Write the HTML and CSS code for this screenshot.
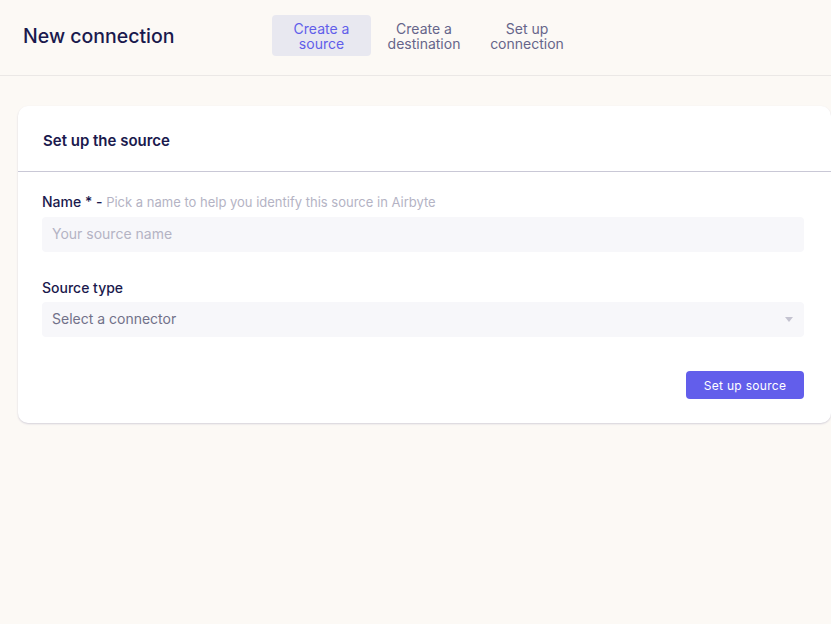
FILE: index.html
```html
<!DOCTYPE html>
<html>
<head>
<meta charset="utf-8">
<link rel="stylesheet" href="styles.css">
</head>
<body>
<header class="header">
  <h1 class="title">New connection</h1>
  <nav class="steps">
    <div class="step active">Create a<br>source</div>
    <div class="step">Create a<br>destination</div>
    <div class="step">Set up<br>connection</div>
  </nav>
</header>
<main class="content">
  <section class="card">
    <div class="card-head">Set up the source</div>
    <div class="card-body">
      <div class="field">
        <div class="label">Name * - <span class="hint">Pick a name to help you identify this source in Airbyte</span></div>
        <div class="input placeholder">Your source name</div>
      </div>
      <div class="field">
        <div class="label">Source type</div>
        <div class="input select">
          <span class="select-text">Select a connector</span>
          <svg class="caret" width="8" height="5" viewBox="0 0 8 5"><path d="M0 0 H8 L4 5 Z" fill="#c4c3d0"/></svg>
        </div>
      </div>
      <div class="actions">
        <button class="btn">Set up source</button>
      </div>
    </div>
  </section>
</main>
</body>
</html>
```
FILE: styles.css
```css
* { box-sizing: border-box; }
html, body { margin: 0; padding: 0; }
body {
  background: #fcf9f5;
  font-family: Inter, "Noto Sans", sans-serif;
  color: #1a194d;
  width: 831px;
  height: 624px;
  overflow: hidden;
}
.header {
  height: 76px;
  border-bottom: 1px solid #ebe8e6;
  display: flex;
  align-items: center;
  padding-left: 23px;
  padding-bottom: 4px;
}
.title {
  margin: 0;
  font-size: 19.5px;
  font-weight: 500;
  width: 249px;
  color: #1a194d;
}
.steps {
  display: flex;
  align-self: flex-start;
  margin-top: 15px;
}
.step {
  font-size: 14px;
  line-height: 15px;
  text-align: center;
  color: #66658a;
  padding: 6px 0;
  height: 41px;
  border-radius: 4px;
  width: 100px;
  margin-right: 3px;
}
.step:nth-child(2) { width: 100px; margin-right: 0; }
.step:nth-child(3) { width: 106px; }
.step.active {
  background: #e8e8f0;
  color: #615eea;
  width: 99px;
}
.content {
  padding: 30px 0 0 18px;
}
.card {
  width: 813px;
  background: #fff;
  border-radius: 10px;
  box-shadow: 0 1px 2px rgba(53, 50, 110, 0.2);
}
.card-head {
  height: 66px;
  padding: 3px 25px 0;
  display: flex;
  align-items: center;
  font-size: 15px;
  font-weight: 600;
  border-bottom: 1px solid #c9c8d6;
  color: #1a194d;
}
.card-body {
  padding: 21px 27px 24px 24px;
}
.field { margin-bottom: 27px; }
.field + .field { margin-bottom: 34px; }
.label {
  font-size: 14px;
  font-weight: 500;
  line-height: 17px;
  margin-bottom: 6px;
  color: #1a194d;
}
.hint {
  font-size: 13px;
  font-weight: 400;
  color: #b4b3c4;
}
.input {
  height: 35px;
  background: #f7f7fa;
  border-radius: 4px;
  padding: 0 10px 2px;
  display: flex;
  align-items: center;
  font-size: 14px;
}
.placeholder { color: #b4b3c4; }
.select {
  justify-content: space-between;
  color: #717189;
  padding-right: 11px;
}
.caret { margin-top: 1px; }
.actions {
  display: flex;
  justify-content: flex-end;
}
.btn {
  font-family: Inter, "Noto Sans", sans-serif;
  background: #625eeb;
  color: #fff;
  border: none;
  border-radius: 4px;
  height: 28px;
  width: 118px;
  font-size: 12px;
  letter-spacing: 0.3px;
}
```
